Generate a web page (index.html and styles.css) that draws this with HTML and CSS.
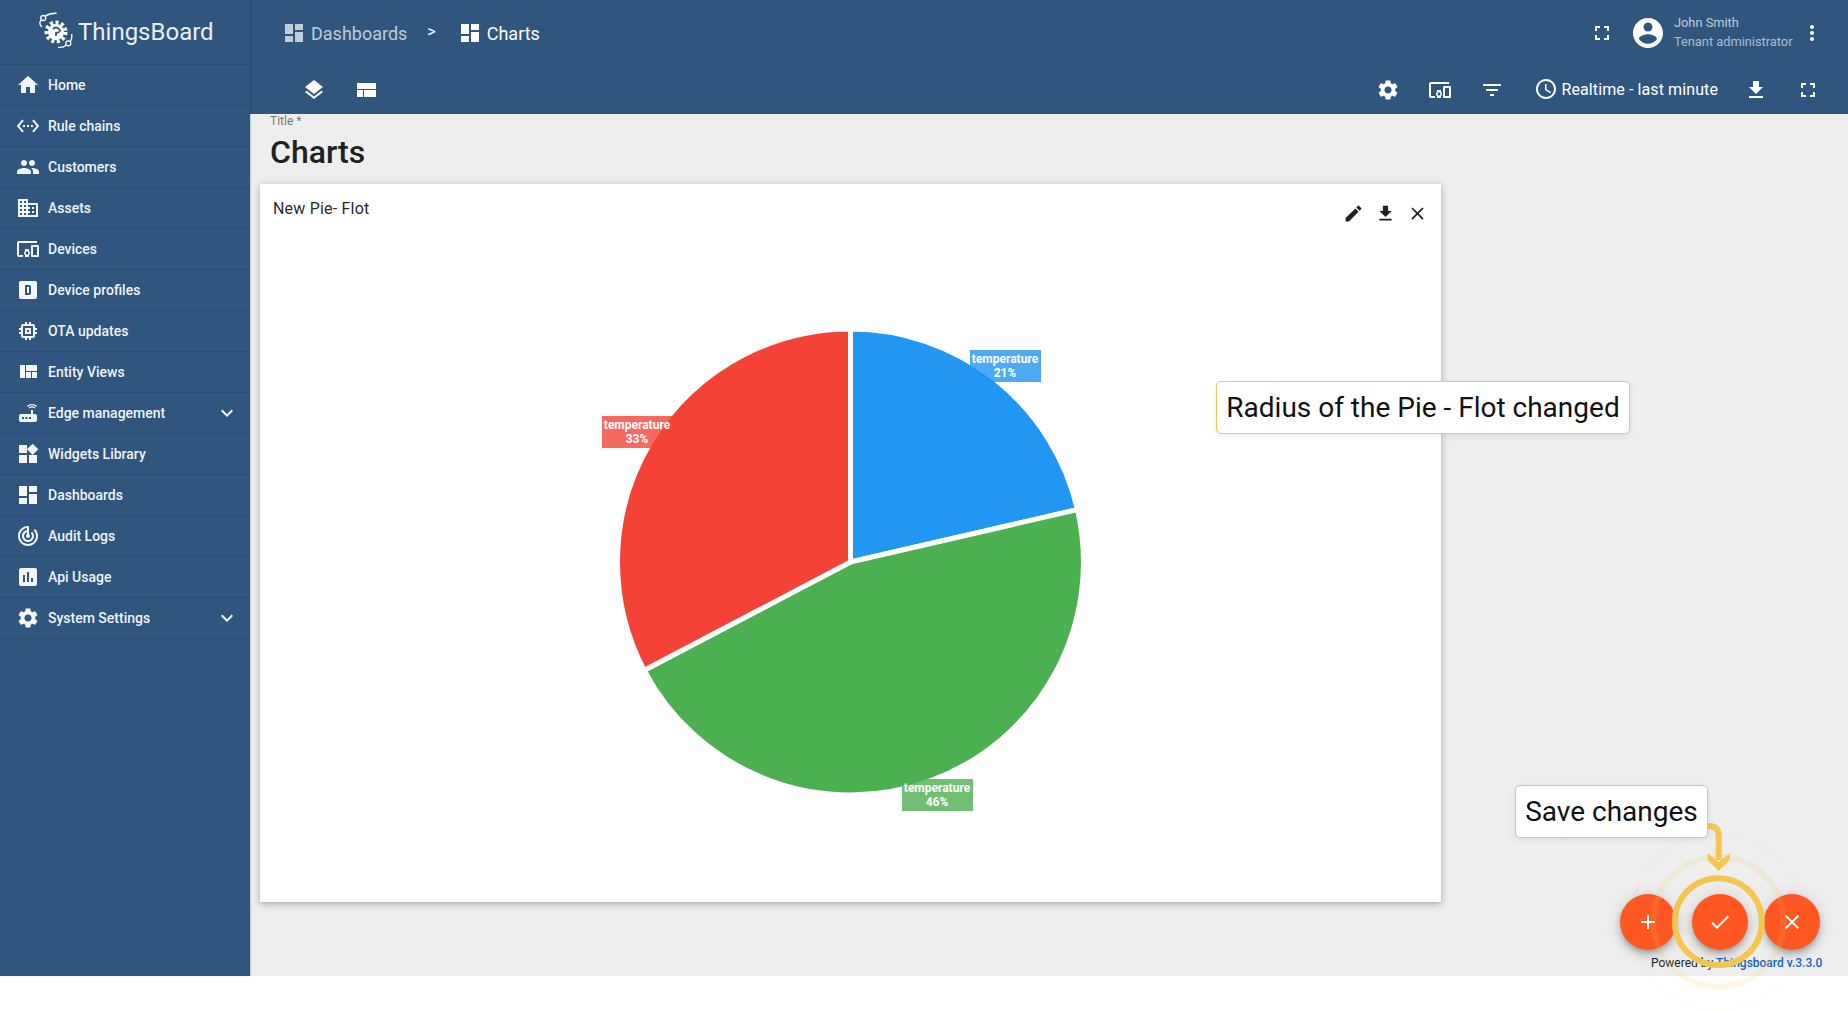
FILE: index.html
```html
<!DOCTYPE html>
<html lang="en">
<head>
  <meta charset="UTF-8">
  <title>ThingsBoard | Charts</title>
  <link rel="stylesheet" href="styles.css">
</head>
<body>

<svg class="icon-defs" xmlns="http://www.w3.org/2000/svg">
  <symbol id="i-home" viewBox="0 0 24 24"><path d="M10 20v-6h4v6h5v-8h3L12 3 2 12h3v8z"/></symbol>
  <symbol id="i-rule" viewBox="0 0 24 24"><path d="M7.77 6.76L6.23 5.48.82 12l5.41 6.52 1.54-1.28L3.42 12l4.35-5.24zM7 13h2v-2H7v2zm10-2h-2v2h2v-2zm-6 2h2v-2h-2v2zm6.77-7.52l-1.54 1.28L20.58 12l-4.35 5.24 1.54 1.28L23.18 12l-5.41-6.52z"/></symbol>
  <symbol id="i-people" viewBox="0 0 24 24"><path d="M16 11c1.66 0 2.99-1.34 2.99-3S17.66 5 16 5c-1.66 0-3 1.34-3 3s1.34 3 3 3zm-8 0c1.66 0 2.99-1.34 2.99-3S9.66 5 8 5C6.34 5 5 6.34 5 8s1.34 3 3 3zm0 2c-2.33 0-7 1.17-7 3.5V19h14v-2.5c0-2.33-4.67-3.5-7-3.5zm8 0c-.29 0-.62.02-.97.05 1.16.84 1.97 1.97 1.97 3.45V19h6v-2.5c0-2.33-4.67-3.5-7-3.5z"/></symbol>
  <symbol id="i-domain" viewBox="0 0 24 24"><path d="M12 7V3H2v18h20V7H12zM6 19H4v-2h2v2zm0-4H4v-2h2v2zm0-4H4V9h2v2zm0-4H4V5h2v2zm4 12H8v-2h2v2zm0-4H8v-2h2v2zm0-4H8V9h2v2zm0-4H8V5h2v2zm10 12h-8v-2h2v-2h-2v-2h2v-2h-2V9h8v10zm-2-8h-2v2h2v-2zm0 4h-2v2h2v-2z"/></symbol>
  <symbol id="i-devices" viewBox="0 0 24 24"><path d="M3 6h18V4H3c-1.1 0-2 .9-2 2v12c0 1.1.9 2 2 2h4v-2H3V6zm10 6H9v1.78c-.61.55-1 1.33-1 2.22s.39 1.67 1 2.22V20h4v-1.78c.61-.55 1-1.34 1-2.22s-.39-1.67-1-2.22V12zm-2 5.5c-.83 0-1.5-.67-1.5-1.5s.67-1.5 1.5-1.5 1.5.67 1.5 1.5-.67 1.5-1.5 1.5zM22 8h-6c-.5 0-1 .5-1 1v10c0 .5.5 1 1 1h6c.5 0 1-.5 1-1V9c0-.5-.5-1-1-1zm-1 10h-4v-8h4v8z"/></symbol>
  <symbol id="i-profile" viewBox="0 0 24 24"><path fill-rule="evenodd" d="M5 3h14c1.1 0 2 .9 2 2v14c0 1.1-.9 2-2 2H5c-1.1 0-2-.9-2-2V5c0-1.1.9-2 2-2zm4 4v10h4c1.1 0 2-.9 2-2V9c0-1.1-.9-2-2-2H9zm2 2h2v6h-2V9z"/></symbol>
  <symbol id="i-memory" viewBox="0 0 24 24"><path d="M15 9H9v6h6V9zm-2 4h-2v-2h2v2zm8-2V9h-2V7c0-1.1-.9-2-2-2h-2V3h-2v2h-2V3H9v2H7c-1.1 0-2 .9-2 2v2H3v2h2v2H3v2h2v2c0 1.1.9 2 2 2h2v2h2v-2h2v2h2v-2h2c1.1 0 2-.9 2-2v-2h2v-2h-2v-2h2zm-4 6H7V7h10v10z"/></symbol>
  <symbol id="i-quilt" viewBox="0 0 24 24"><path d="M10 18h5v-6h-5v6zm-6 0h5V5H4v13zm12 0h5v-6h-5v6zM10 5v6h11V5H10z"/></symbol>
  <symbol id="i-router" viewBox="0 0 24 24"><path d="M20.2 5.9l.8-.8C19.6 3.7 17.8 3 16 3s-3.6.7-5 2.1l.8.8C13 4.8 14.5 4.2 16 4.2s3 .6 4.2 1.7zm-.9.8c-.9-.9-2.1-1.4-3.3-1.4s-2.4.5-3.3 1.4l.8.8c.7-.7 1.6-1 2.5-1 .9 0 1.8.3 2.5 1l.8-.8zM19 13h-2V9h-2v4H5c-1.1 0-2 .9-2 2v4c0 1.1.9 2 2 2h14c1.1 0 2-.9 2-2v-4c0-1.1-.9-2-2-2zM8 18H6v-2h2v2zm3.5 0h-2v-2h2v2zm3.5 0h-2v-2h2v2z"/></symbol>
  <symbol id="i-widgets" viewBox="0 0 24 24"><path d="M13 13v8h8v-8h-8zM3 21h8v-8H3v8zM3 3v8h8V3H3zm13.66-1.31L11 7.34 16.66 13l5.66-5.66-5.66-5.65z"/></symbol>
  <symbol id="i-dashboard" viewBox="0 0 24 24"><path d="M3 13h8V3H3v10zm0 8h8v-6H3v6zm10 0h8V11h-8v10zm0-18v6h8V3h-8z"/></symbol>
  <symbol id="i-audit" viewBox="0 0 24 24"><path d="M19.07 4.93l-1.41 1.41C19.1 7.79 20 9.79 20 12c0 4.42-3.58 8-8 8s-8-3.58-8-8c0-4.08 3.05-7.44 7-7.93v2.02C8.16 6.57 6 9.03 6 12c0 3.31 2.69 6 6 6s6-2.69 6-6c0-1.66-.67-3.16-1.76-4.24l-1.41 1.41C15.55 9.9 16 10.9 16 12c0 2.21-1.79 4-4 4s-4-1.79-4-4c0-1.86 1.28-3.41 3-3.86v2.14c-.6.35-1 .98-1 1.72 0 1.1.9 2 2 2s2-.9 2-2c0-.74-.4-1.38-1-1.72V2h-1C6.48 2 2 6.48 2 12s4.48 10 10 10 10-4.48 10-10c0-2.76-1.12-5.26-2.93-7.07z"/></symbol>
  <symbol id="i-chart" viewBox="0 0 24 24"><path d="M19 3H5c-1.1 0-2 .9-2 2v14c0 1.1.9 2 2 2h14c1.1 0 2-.9 2-2V5c0-1.1-.9-2-2-2zM9 17H7v-7h2v7zm4 0h-2V7h2v10zm4 0h-2v-4h2v4z"/></symbol>
  <symbol id="i-settings" viewBox="0 0 24 24"><path d="M19.14 12.94c.04-.3.06-.61.06-.94 0-.32-.02-.64-.07-.94l2.03-1.58c.18-.14.23-.41.12-.61l-1.92-3.32c-.12-.22-.37-.29-.59-.22l-2.39.96c-.5-.38-1.03-.7-1.62-.94l-.36-2.54c-.04-.24-.24-.41-.48-.41h-3.84c-.24 0-.43.17-.47.41l-.36 2.54c-.59.24-1.13.57-1.62.94l-2.39-.96c-.22-.08-.47 0-.59.22L2.74 8.87c-.12.21-.08.47.12.61l2.03 1.58c-.05.3-.09.63-.09.94s.02.64.07.94l-2.03 1.58c-.18.14-.23.41-.12.61l1.92 3.32c.12.22.37.29.59.22l2.39-.96c.5.38 1.03.7 1.62.94l.36 2.54c.05.24.24.41.48.41h3.84c.24 0 .44-.17.47-.41l.36-2.54c.59-.24 1.13-.56 1.62-.94l2.39.96c.22.08.47 0 .59-.22l1.92-3.32c.12-.22.07-.47-.12-.61l-2.01-1.58zM12 15.6c-1.98 0-3.6-1.62-3.6-3.6s1.62-3.6 3.6-3.6 3.6 1.62 3.6 3.6-1.62 3.6-3.6 3.6z"/></symbol>
  <symbol id="i-expand" viewBox="0 0 24 24"><path d="M16.59 8.59L12 13.17 7.41 8.59 6 10l6 6 6-6z"/></symbol>
  <symbol id="i-layers" viewBox="0 0 24 24"><path d="M11.99 18.54l-7.37-5.73L3 14.07l9 7 9-7-1.63-1.27-7.38 5.74zM12 16l7.36-5.73L21 9l-9-7-9 7 1.63 1.27L12 16z"/></symbol>
  <symbol id="i-compact" viewBox="0 0 24 24"><path d="M3 19h6v-7H3v7zm7 0h12v-7H10v7zM3 5v6h19V5H3z"/></symbol>
  <symbol id="i-fullscreen" viewBox="0 0 24 24"><path d="M7 14H5v5h5v-2H7v-3zm-2-4h2V7h3V5H5v5zm12 7h-3v2h5v-5h-2v3zM14 5v2h3v3h2V5h-5z"/></symbol>
  <symbol id="i-account" viewBox="0 0 24 24"><path d="M12 2C6.48 2 2 6.48 2 12s4.48 10 10 10 10-4.48 10-10S17.52 2 12 2zm0 3c1.66 0 3 1.34 3 3s-1.34 3-3 3-3-1.34-3-3 1.34-3 3-3zm0 14.2c-2.5 0-4.71-1.28-6-3.22.03-1.99 4-3.08 6-3.08 1.99 0 5.97 1.09 6 3.08-1.29 1.94-3.5 3.22-6 3.22z"/></symbol>
  <symbol id="i-more" viewBox="0 0 24 24"><path d="M12 8c1.1 0 2-.9 2-2s-.9-2-2-2-2 .9-2 2 .9 2 2 2zm0 2c-1.1 0-2 .9-2 2s.9 2 2 2 2-.9 2-2-.9-2-2-2zm0 6c-1.1 0-2 .9-2 2s.9 2 2 2 2-.9 2-2-.9-2-2-2z"/></symbol>
  <symbol id="i-filter" viewBox="0 0 24 24"><path d="M10 18h4v-2h-4v2zM3 6v2h18V6H3zm3 7h12v-2H6v2z"/></symbol>
  <symbol id="i-clock" viewBox="0 0 24 24"><path d="M11.99 2C6.47 2 2 6.48 2 12s4.47 10 9.99 10C17.52 22 22 17.52 22 12S17.52 2 11.99 2zM12 20c-4.42 0-8-3.58-8-8s3.58-8 8-8 8 3.58 8 8-3.58 8-8 8zm.5-13H11v6l5.25 3.15.75-1.23-4.5-2.67z"/></symbol>
  <symbol id="i-download" viewBox="0 0 24 24"><path d="M19 9h-4V3H9v6H5l7 7 7-7zM5 18v2h14v-2H5z"/></symbol>
  <symbol id="i-edit" viewBox="0 0 24 24"><path d="M3 17.25V21h3.75L17.81 9.94l-3.75-3.75L3 17.25zM20.71 7.04c.39-.39.39-1.02 0-1.41l-2.34-2.34c-.39-.39-1.02-.39-1.41 0l-1.83 1.83 3.75 3.75 1.83-1.83z"/></symbol>
  <symbol id="i-close" viewBox="0 0 24 24"><path d="M19 6.41L17.59 5 12 10.59 6.41 5 5 6.41 10.59 12 5 17.59 6.41 19 12 13.41 17.59 19 19 17.59 13.41 12z"/></symbol>
  <symbol id="i-add" viewBox="0 0 24 24"><path d="M19 13h-6v6h-2v-6H5v-2h6V5h2v6h6v2z"/></symbol>
  <symbol id="i-done" viewBox="0 0 24 24"><path d="M9 16.17L4.83 12l-1.42 1.41L9 19 21 7l-1.41-1.41z"/></symbol>
</svg>

<div class="app">
  <!-- Sidebar -->
  <aside class="sidebar">
    <div class="logo">
      <svg class="logo-mark" viewBox="0 0 44 44">
        <circle class="logo-gear" cx="21" cy="22" r="8"/>
        <circle class="logo-teeth" cx="21" cy="22" r="9.5"/>
        <path class="logo-cut" d="M18 19q3-3 6 0t-3 4v3"/>
        <g class="logo-lines">
          <circle cx="8.3" cy="8" r="2.5"/>
          <path d="M10.5 6Q15 3 21.7 3.3M6.3 9.7Q4.3 12 5 14q.5 2 2 3"/>
          <circle cx="33.3" cy="33.3" r="2.5"/>
          <path d="M23 37.3Q28 38 31.3 35.2M36.7 24q.8 4-1.3 7.6"/>
        </g>
      </svg>
      <span class="logo-text">ThingsBoard</span>
    </div>
    <nav class="menu">
      <a class="menu-item"><svg class="icon"><use href="#i-home"/></svg>Home</a>
      <a class="menu-item"><svg class="icon"><use href="#i-rule"/></svg>Rule chains</a>
      <a class="menu-item"><svg class="icon"><use href="#i-people"/></svg>Customers</a>
      <a class="menu-item"><svg class="icon"><use href="#i-domain"/></svg>Assets</a>
      <a class="menu-item"><svg class="icon"><use href="#i-devices"/></svg>Devices</a>
      <a class="menu-item"><svg class="icon"><use href="#i-profile"/></svg>Device profiles</a>
      <a class="menu-item"><svg class="icon"><use href="#i-memory"/></svg>OTA updates</a>
      <a class="menu-item"><svg class="icon"><use href="#i-quilt"/></svg>Entity Views</a>
      <a class="menu-item"><svg class="icon"><use href="#i-router"/></svg>Edge management<svg class="icon chevron"><use href="#i-expand"/></svg></a>
      <a class="menu-item"><svg class="icon"><use href="#i-widgets"/></svg>Widgets Library</a>
      <a class="menu-item"><svg class="icon"><use href="#i-dashboard"/></svg>Dashboards</a>
      <a class="menu-item"><svg class="icon"><use href="#i-audit"/></svg>Audit Logs</a>
      <a class="menu-item"><svg class="icon"><use href="#i-chart"/></svg>Api Usage</a>
      <a class="menu-item"><svg class="icon"><use href="#i-settings"/></svg>System Settings<svg class="icon chevron"><use href="#i-expand"/></svg></a>
    </nav>
  </aside>

  <main class="main">
    <!-- Toolbar -->
    <header class="toolbar">
      <div class="toolbar-top">
        <div class="crumb crumb-parent"><svg class="icon"><use href="#i-dashboard"/></svg><span>Dashboards</span></div>
        <span class="crumb-sep">&gt;</span>
        <div class="crumb"><svg class="icon"><use href="#i-dashboard"/></svg><span>Charts</span></div>
        <svg class="icon push-right"><use href="#i-fullscreen"/></svg>
        <svg class="icon avatar"><use href="#i-account"/></svg>
        <div class="user">
          <div>John Smith</div>
          <div class="user-role">Tenant administrator</div>
        </div>
        <svg class="icon"><use href="#i-more"/></svg>
      </div>
      <div class="toolbar-bottom">
        <svg class="icon"><use href="#i-layers"/></svg>
        <svg class="icon"><use href="#i-compact"/></svg>
        <svg class="icon push-right"><use href="#i-settings"/></svg>
        <svg class="icon"><use href="#i-devices"/></svg>
        <svg class="icon"><use href="#i-filter"/></svg>
        <div class="timewindow"><svg class="icon"><use href="#i-clock"/></svg>Realtime - last minute</div>
        <svg class="icon"><use href="#i-download"/></svg>
        <svg class="icon"><use href="#i-fullscreen"/></svg>
      </div>
    </header>

    <!-- Dashboard -->
    <section class="content">
      <div class="title-label">Title *</div>
      <h1 class="title-text">Charts</h1>

      <div class="widget">
        <div class="widget-head">
          <span class="widget-title">New Pie- Flot</span>
          <div class="widget-actions">
            <svg class="icon"><use href="#i-edit"/></svg>
            <svg class="icon"><use href="#i-download"/></svg>
            <svg class="icon"><use href="#i-close"/></svg>
          </div>
        </div>
        <div class="widget-body">
          <div class="pie">
            <svg class="pie-chart" viewBox="0 0 501 501">
              <path class="slice-blue" d="M250.5 251V18A233 233 0 0 1 477.5 198.6Z"/>
              <path class="slice-green" d="M250.5 251L477.5 198.6A233 233 0 0 1 44.2 359.3Z"/>
              <path class="slice-red" d="M250.5 251L44.2 359.3A233 233 0 0 1 250.5 18Z"/>
            </svg>
            <div class="pie-label label-blue">temperature<br>21%</div>
            <div class="pie-label label-red">temperature<br>33%</div>
            <div class="pie-label label-green">temperature<br>46%</div>
          </div>
        </div>
      </div>
    </section>

    <div class="fabs">
      <button class="fab"><svg class="icon"><use href="#i-add"/></svg></button>
      <button class="fab"><svg class="icon"><use href="#i-done"/></svg></button>
      <button class="fab"><svg class="icon"><use href="#i-close"/></svg></button>
    </div>
    <div class="powered">Powered by <a class="powered-link">Thingsboard v.3.3.0</a></div>
  </main>
</div>

<!-- Tutorial notes drawn over the page -->
<div class="note note-radius">Radius of the Pie - Flot changed</div>
<div class="note note-save">Save changes</div>
<svg class="spotlight" viewBox="1625 815 190 196">
  <circle class="ring-far" cx="1718.3" cy="921.7" r="88"/>
  <circle class="ring-mid" cx="1718.3" cy="921.7" r="65"/>
  <circle class="ring-main" cx="1718.3" cy="921.7" r="43.5"/>
  <path class="arrow-line" d="M1708 826h1q9.7 0 9.7 10v24"/>
  <path class="arrow-head" d="M1707.7 853l11 9 11-9v7l-11 11-11-11z"/>
</svg>

</body>
</html>
```

FILE: styles.css
```css
html, body {
  margin: 0;
  padding: 0;
}
body {
  position: relative;
  height: 1011px;
  overflow: hidden;
  background: #fff;
  font-family: Roboto, "Noto Sans", sans-serif;
  color: #212121;
}
.icon-defs {
  display: none;
}
.icon {
  width: 24px;
  height: 24px;
  flex: none;
  fill: currentColor;
}
.app {
  display: grid;
  grid-template-columns: 250px 1fr;
  height: 976px;
}

/* sidebar */
.sidebar {
  background: #305680;
  color: #fff;
  box-shadow: 1px 0 1px rgba(0, 0, 0, 0.15);
  position: relative;
  z-index: 2;
}
.logo {
  display: flex;
  align-items: center;
  height: 65px;
  padding-left: 35px;
  border-bottom: 1px solid rgba(0, 0, 0, 0.12);
  box-sizing: border-box;
}
.logo-mark {
  width: 44px;
  height: 44px;
  flex: none;
}
.logo-gear {
  fill: #fff;
}
.logo-teeth {
  fill: none;
  stroke: #fff;
  stroke-width: 4;
  stroke-dasharray: 3 2.5;
}
.logo-cut {
  fill: none;
  stroke: #305680;
  stroke-width: 1.8;
}
.logo-lines {
  fill: none;
  stroke: #fff;
  stroke-width: 1.3;
}
.logo-text {
  margin-left: -1px;
  font-size: 24px;
  color: rgba(255, 255, 255, 0.92);
}
.menu-item {
  display: flex;
  align-items: center;
  height: 41px;
  padding-left: 16px;
  border-bottom: 1px solid rgba(0, 0, 0, 0.12);
  box-sizing: border-box;
  font-size: 14px;
  font-weight: 500;
  color: rgba(255, 255, 255, 0.95);
}
.menu-item .icon {
  margin-right: 8px;
}
.menu-item .chevron {
  margin: 0 11px 0 auto;
}

/* toolbar */
.main {
  display: flex;
  flex-direction: column;
  background: #eee;
  min-width: 0;
}
.toolbar {
  background: #305680;
  color: #fff;
  height: 114px;
  flex: none;
}
.toolbar-top {
  display: flex;
  align-items: center;
  height: 66px;
  padding: 0 24px 0 32px;
}
.crumb {
  display: flex;
  align-items: center;
  gap: 5px;
  font-size: 18px;
}
.crumb-parent {
  color: rgba(255, 255, 255, 0.7);
}
.crumb-sep {
  margin: -4px 22px 0 20px;
  font-size: 16px;
}
.push-right {
  margin-left: auto;
}
.avatar {
  width: 36px;
  height: 36px;
  margin-left: 16px;
}
.user {
  margin: 0 8px 2px;
  width: 118px;
  font-size: 12.8px;
  line-height: 19px;
  white-space: nowrap;
  color: rgba(255, 255, 255, 0.7);
}
.user-role {
  color: rgba(255, 255, 255, 0.6);
}
.toolbar-bottom {
  display: flex;
  align-items: center;
  gap: 28px;
  height: 48px;
  padding: 0 28px 0 52px;
}
.timewindow {
  display: flex;
  align-items: center;
  gap: 4px;
  margin: 0 -2px 2px 2px;
  font-size: 16px;
  letter-spacing: 0.1px;
}

/* dashboard */
.content {
  padding-left: 10px;
  flex: 1;
}
.title-label {
  margin-left: 10px;
  font-size: 12px;
  line-height: 14px;
  color: rgba(0, 0, 0, 0.54);
}
.title-text {
  margin: 4px 0 12px 10px;
  font-size: 32px;
  line-height: 40px;
  font-weight: 500;
}
.widget {
  display: flex;
  flex-direction: column;
  width: 1181px;
  height: 718px;
  background: #fff;
  box-shadow: 0 2px 7px rgba(0, 0, 0, 0.3);
}
.widget-head {
  display: flex;
  justify-content: space-between;
  align-items: flex-start;
  height: 36px;
  padding: 13px 13px 0;
  box-sizing: border-box;
  flex: none;
}
.widget-title {
  font-size: 16px;
  line-height: 24px;
  letter-spacing: 0.2px;
  color: rgba(0, 0, 0, 0.87);
}
.widget-actions {
  display: flex;
  gap: 11px;
  margin-top: 6px;
}
.widget-actions .icon {
  width: 21px;
  height: 21px;
}
.widget-body {
  flex: 1;
  display: flex;
  align-items: center;
  justify-content: center;
  padding-top: 1px;
}

/* pie chart, labels sit on top of the slices */
.pie {
  position: relative;
  width: 501px;
  height: 501px;
  margin-right: 1px;
}
.pie-chart {
  display: block;
  width: 501px;
  height: 501px;
}
.pie-chart path {
  stroke: #fff;
  stroke-width: 5;
  stroke-linejoin: miter;
}
.slice-blue {
  fill: #2196f3;
}
.slice-green {
  fill: #4caf50;
}
.slice-red {
  fill: #f44336;
}
.pie-label {
  position: absolute;
  width: 71px;
  height: 32px;
  padding-top: 2px;
  box-sizing: border-box;
  text-align: center;
  font-size: 12px;
  line-height: 14px;
  font-weight: 700;
  color: #fff;
}
.label-blue {
  left: 370px;
  top: 39px;
  background: rgba(33, 150, 243, 0.8);
}
.label-red {
  left: 2px;
  top: 105px;
  background: rgba(244, 67, 54, 0.8);
}
.label-green {
  left: 302px;
  top: 468px;
  background: rgba(76, 175, 80, 0.8);
}

/* floating buttons */
.fabs {
  position: absolute;
  left: 1620px;
  top: 894px;
  display: flex;
  gap: 16px;
}
.fab {
  display: flex;
  align-items: center;
  justify-content: center;
  width: 56px;
  height: 56px;
  padding: 0;
  border: none;
  border-radius: 50%;
  background: #ff5722;
  color: #fff;
  box-shadow: 0 3px 5px -1px rgba(0, 0, 0, 0.2), 0 6px 10px 0 rgba(0, 0, 0, 0.14), 0 1px 18px 0 rgba(0, 0, 0, 0.12);
}
.powered {
  position: absolute;
  left: 1651px;
  top: 955px;
  font-size: 12px;
  line-height: 16px;
  white-space: nowrap;
}
.powered-link {
  font-weight: 500;
  color: #1565c0;
}

/* tutorial notes */
.note {
  position: absolute;
  z-index: 5;
  box-sizing: border-box;
  background: #fff;
  border: 1px solid #f3c74f;
  border-radius: 5px;
  box-shadow: 0 2px 6px rgba(0, 0, 0, 0.08);
  font-size: 28px;
  line-height: 52px;
  text-align: center;
  color: #111;
  white-space: nowrap;
}
.note-radius {
  left: 1216px;
  top: 381px;
  width: 414px;
  height: 53px;
}
.note-save {
  left: 1515px;
  top: 785px;
  width: 193px;
  height: 53px;
}
.spotlight {
  position: absolute;
  z-index: 4;
  left: 1625px;
  top: 815px;
  width: 190px;
  height: 196px;
}
.spotlight circle {
  fill: none;
  stroke: #f3c74f;
}
.ring-main {
  stroke-width: 6;
}
.ring-mid {
  stroke-width: 6;
  opacity: 0.15;
}
.ring-far {
  stroke-width: 3;
  opacity: 0.03;
}
.arrow-line {
  fill: none;
  stroke: #f3c74f;
  stroke-width: 6;
}
.arrow-head {
  fill: #f3c74f;
}
```
